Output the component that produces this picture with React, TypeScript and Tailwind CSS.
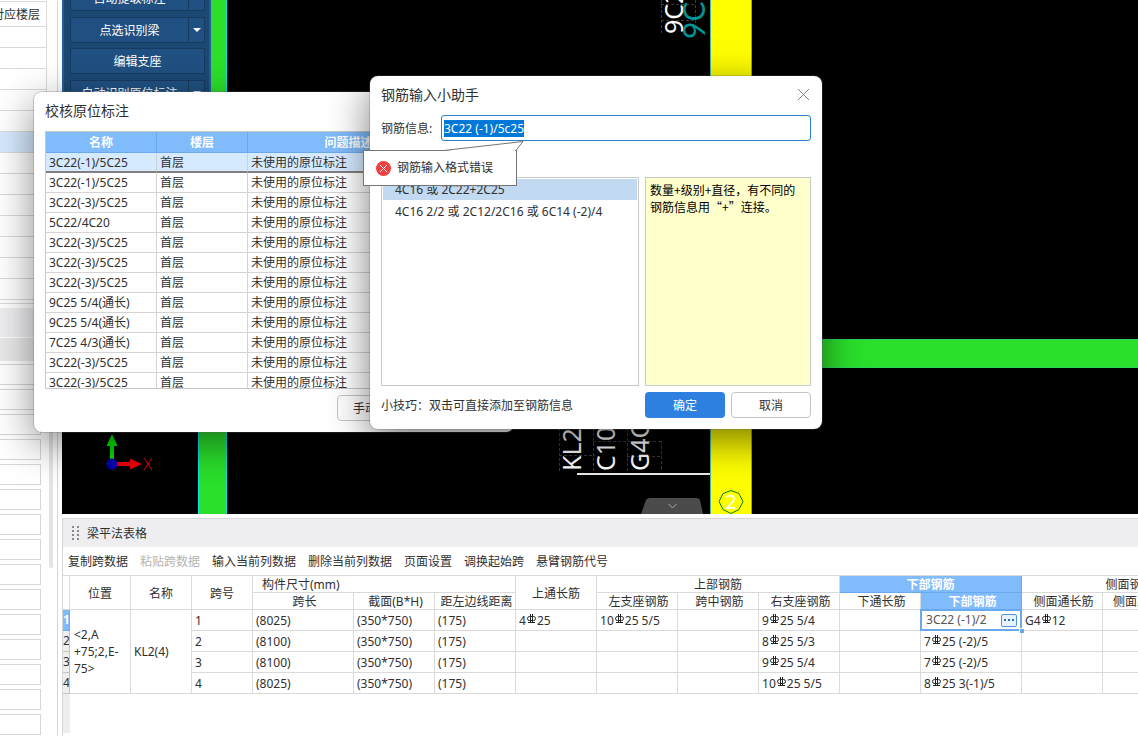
import { useEffect, useRef } from "react";
import type { ReactNode } from "react";

const checkRows = [
  "3C22(-1)/5C25",
  "3C22(-1)/5C25",
  "3C22(-3)/5C25",
  "5C22/4C20",
  "3C22(-3)/5C25",
  "3C22(-3)/5C25",
  "3C22(-3)/5C25",
  "9C25 5/4(通长)",
  "9C25 5/4(通长)",
  "7C25 4/3(通长)",
  "3C22(-3)/5C25",
  "3C22(-3)/5C25",
];

const tableActions = [
  { label: "复制跨数据" },
  { label: "粘贴跨数据", disabled: true },
  { label: "输入当前列数据" },
  { label: "删除当前列数据" },
  { label: "页面设置" },
  { label: "调换起始跨" },
  { label: "悬臂钢筋代号" },
];

const spans = [
  { no: "1", length: "(8025)", size: "(350*750)", edge: "(175)", top: "4C25", left: "10C25 5/5", right: "9C25 5/4", bottom: "", side: "G4C12" },
  { no: "2", length: "(8100)", size: "(350*750)", edge: "(175)", top: "", left: "", right: "8C25 5/3", bottom: "7C25 (-2)/5", side: "" },
  { no: "3", length: "(8100)", size: "(350*750)", edge: "(175)", top: "", left: "", right: "9C25 5/4", bottom: "7C25 (-2)/5", side: "" },
  { no: "4", length: "(8025)", size: "(350*750)", edge: "(175)", top: "", left: "", right: "10C25 5/5", bottom: "8C25 3(-1)/5", side: "" },
];

function Rebar({ value }: { value: string }) {
  const [before, after] = value.split("C");
  if (after === undefined) return null;
  return (
    <span className="flex items-center">
      {before}
      <svg className="mx-px mb-1 h-[10px] w-[9px]" viewBox="0 0 9 10" fill="none" stroke="#222" role="img" aria-label="C">
        <rect x="0.5" y="2.5" width="8" height="4" rx="2" />
        <path d="M3.5 0v9M5.5 0v9M1 8.5h7" />
      </svg>
      {after}
    </span>
  );
}

function Td({ children }: { children?: ReactNode }) {
  return <td className="h-[21px] overflow-hidden border-r border-b border-[#dadada] px-0 pt-px pb-0 pl-[3px] whitespace-nowrap">{children}</td>;
}

function Th({ children, colSpan, rowSpan, active, start }: { children?: ReactNode; colSpan?: number; rowSpan?: number; active?: boolean; start?: boolean }) {
  return (
    <th
      colSpan={colSpan}
      rowSpan={rowSpan}
      className={
        "h-[17px] overflow-hidden border-r border-b pt-px pr-0 pb-0 leading-[15px] whitespace-nowrap " +
        (active ? "border-[#6aa9ee] bg-[#80bbfc] font-bold text-white " : "border-[#dadada] font-normal ") +
        (start ? "pl-[9px] text-left" : colSpan || rowSpan ? "pl-0 text-center" : "pl-[3px] text-center")
      }
    >
      {children}
    </th>
  );
}

function PropertySidebar() {
  return (
    <aside className="w-[62px] shrink-0 overflow-hidden bg-white">
      <div className="h-full w-[58px] border-r border-[#d6d6d6]">
        <table className="mt-px w-[47px] table-fixed border-separate border-spacing-0 border-t border-[#d9d9d9]">
          <thead>
            <tr>
              <th className="h-[25px] border-r border-b border-[#d9d9d9] px-0 pt-0.5 pb-0 font-normal">
                <span className="flex justify-end pr-1.5 whitespace-nowrap">对应楼层</span>
              </th>
            </tr>
          </thead>
          <tbody>
            {Array.from({ length: 13 }, (_, i) => (
              <tr key={i}>
                <td className={"h-[21px] border-r border-b border-[#d9d9d9] p-0 " + (i === 5 ? "bg-[#d6eaff]" : "")} />
              </tr>
            ))}
          </tbody>
        </table>
        <div className="mt-[3px] border-t border-[#d9d9d9]" />
        <div className="mt-1 h-[29px] bg-[#eeeef0]" />
        <div className="mt-px h-[23px] bg-[#e9e9e9]" />
        <div className="mt-[3px] flex gap-2">
          <div className="flex w-[41px] flex-col gap-1">
            {Array.from({ length: 16 }, (_, i) => (
              <input key={i} readOnly aria-label={"属性值 " + (i + 1)} className="h-[21px] w-full border border-l-0 border-[#d6d6d6] bg-white outline-none" />
            ))}
          </div>
          <div className="h-[204px] w-1 rounded-full bg-[#e4e4e4]" />
        </div>
      </div>
    </aside>
  );
}

function ToolButton({ label, split }: { label: string; split?: boolean }) {
  return (
    <div className="flex h-[26px] border border-[#173a5e] bg-[#205081] text-white">
      <button className="flex-1 pt-px">{label}</button>
      {split && (
        <button aria-label={label + " 更多"} className="flex w-4 items-center justify-center border-l border-[#173a5e]">
          <svg className="h-1 w-2" viewBox="0 0 8 4">
            <path d="M0 0h8L4 4z" fill="#fff" />
          </svg>
        </button>
      )}
    </div>
  );
}

function Viewport() {
  return (
    <section className="relative flex-1 overflow-hidden bg-black">
      <svg className="absolute top-0 left-0 h-[514px] w-full" aria-label="梁平面图" fontFamily="'Noto Sans', sans-serif">
        <rect x="136" y="0" width="29" height="514" fill="#2bdf2b" />
        <path d="M136.5 0v514M164.5 0v514" stroke="#00e5e5" />
        <rect x="690" y="339" width="100%" height="29" fill="#2bdf2b" />
        <path d="M690 339.5h2000M690 367.5h2000" stroke="#27d65f" />
        <rect x="648" y="0" width="42" height="514" fill="#ffff00" />
        <path d="M648.5 0v514M689.5 0v514" stroke="#4bb6a0" />

        <g fill="none" stroke="#3a3a3a" strokeDasharray="3 2">
          <path d="M497.5 428v43M531.5 428v43M565.5 428v43M599.5 441v30M497 455.5h36M531 441.5h68M565 456.5h34" />
          <path d="M599.5 0v34M633.5 0v34M599 20.5h34M599 4.5h34" />
        </g>
        <g fill="#ffffff" fontSize="25">
          <text transform="translate(519 471) rotate(-90)">KL2(4)</text>
          <text transform="translate(553 471) rotate(-90)">C10@100</text>
          <text transform="translate(587 471) rotate(-90)">G4C12</text>
          <text transform="translate(621 34) rotate(-90)">9C25</text>
        </g>
        <text transform="translate(643 39) rotate(-90)" fill="#009494" fontFamily="Lato, sans-serif" fontSize="30" fontWeight="400">9C25</text>
        <path d="M515 474h133" stroke="#e9e9e9" strokeWidth="2" />

        <path d="M579 514l5-14q1-2 4-2h46q3 0 4 2l3 14z" fill="#4b4b4b" />
        <path d="M606.5 504l4 4 4-4" fill="none" stroke="#aaa" />
        <path d="M669 490.5l8 3 4 8-4 8-8 4-8-4-4-8 4-8z" fill="none" stroke="#008000" />
        <text x="669" y="509" fill="#fff" fontSize="20" textAnchor="middle">2</text>

        <path d="M48 438h4v22h-4z" fill="#00e000" />
        <path d="M44.500 446h11L50 434z" fill="#00e000" />
        <path d="M54 462h16v4H54z" fill="#ee0000" />
        <path d="M68 458.500v11l12-5.500z" fill="#ee0000" />
        <circle cx="50" cy="464" r="5.500" fill="#0000b4" />
        <path d="M82 458l8 12M90 458l-8 12" stroke="#ee0000" />
      </svg>

      <div className="absolute -top-[15px] left-0 flex w-[149px] flex-col gap-1.5 border-x-2 border-[#275c9b] bg-[#1b4872] pr-1 pb-4 pl-[6px]">
        <ToolButton label="自动提取标注" split />
        <div className="flex flex-col gap-[5px]">
          <ToolButton label="点选识别梁" split />
          <ToolButton label="编辑支座" />
        </div>
        <ToolButton label="自动识别原位标注" split />
      </div>
    </section>
  );
}

function BeamPanel() {
  return (
    <section className="mt-1 flex h-[218px] shrink-0 flex-col border-t border-l border-[#d6d6d6] bg-white">
      <header className="flex h-[28px] shrink-0 items-center gap-2 bg-[#eeeef0] pl-[9px]">
        <svg className="h-[14px] w-[7px]" viewBox="0 0 7 14" fill="#888" aria-hidden="true">
          <path d="M0 0h2v2H0zM5 0h2v2H5zM0 4h2v2H0zM5 4h2v2H5zM0 8h2v2H0zM5 8h2v2H5zM0 12h2v2H0zM5 12h2v2H5z" />
        </svg>
        <h2 className="pt-0.5">梁平法表格</h2>
      </header>
      <div className="flex h-[28px] shrink-0 items-center gap-3 pt-0.5 pl-[5px] whitespace-nowrap">
        {tableActions.map((a) => (
          <button key={a.label} disabled={a.disabled} className="disabled:text-[#b4b4b4]">
            {a.label}
          </button>
        ))}
      </div>
      <div className="flex-1 overflow-hidden border-t border-[#dadada]">
        <table className="w-[1230px] table-fixed border-separate border-spacing-0">
          <colgroup>
            <col className="w-[7px]" />
            <col className="w-[61px]" />
            <col className="w-[61px]" />
            <col className="w-[61px]" />
            <col className="w-[101px]" />
            <col className="w-[81px]" />
            <col className="w-[81px]" />
            <col className="w-[81px]" />
            <col className="w-[81px]" />
            <col className="w-[81px]" />
            <col className="w-[81px]" />
            <col className="w-[81px]" />
            <col className="w-[101px]" />
            <col className="w-[81px]" />
            <col className="w-[102px]" />
            <col className="w-[88px]" />
          </colgroup>
          <thead>
            <tr>
              <Th rowSpan={2} />
              <Th rowSpan={2}>位置</Th>
              <Th rowSpan={2}>名称</Th>
              <Th rowSpan={2}>跨号</Th>
              <Th colSpan={3} start>构件尺寸(mm)</Th>
              <Th rowSpan={2}>上通长筋</Th>
              <Th colSpan={3}>上部钢筋</Th>
              <Th colSpan={2} active>下部钢筋</Th>
              <Th colSpan={3}>侧面钢筋(总配筋值)</Th>
            </tr>
            <tr>
              <Th>跨长</Th>
              <Th>截面(B*H)</Th>
              <Th>距左边线距离</Th>
              <Th>左支座钢筋</Th>
              <Th>跨中钢筋</Th>
              <Th>右支座钢筋</Th>
              <Th>下通长筋</Th>
              <Th active>下部钢筋</Th>
              <Th>侧面通长筋</Th>
              <Th>侧面原位标注筋</Th>
              <Th>拉筋</Th>
            </tr>
          </thead>
          <tbody>
            {spans.map((s, i) => (
              <tr key={s.no}>
                <th
                  scope="row"
                  className={
                    "overflow-hidden border-r border-b p-0 text-left " +
                    (i === 0 ? "border-[#6aa9ee] bg-[#80bbfc] font-bold text-white" : "border-[#c4c4c4] bg-[#eeeeee] font-normal")
                  }
                >
                  {s.no}
                </th>
                {i === 0 && (
                  <>
                    <td rowSpan={4} className="border-r border-b border-[#dadada] px-1 py-0 leading-[17px]">
                      {"<2,A"}
                      <br />
                      {"+75;2,E-"}
                      <br />
                      {"75>"}
                    </td>
                    <td rowSpan={4} className="border-r border-b border-[#dadada] px-[3px] py-0">KL2(4)</td>
                  </>
                )}
                <Td>{s.no}</Td>
                <Td>{s.length}</Td>
                <Td>{s.size}</Td>
                <Td>{s.edge}</Td>
                <Td><Rebar value={s.top} /></Td>
                <Td><Rebar value={s.left} /></Td>
                <Td />
                <Td><Rebar value={s.right} /></Td>
                <Td />
                {i === 0 ? (
                  <td className="relative h-[21px] p-0">
                    <div className="absolute -top-px -left-px flex h-[22px] w-[102px] items-center justify-between border-2 border-[#69a8ec] bg-white pr-[3px] pl-1 text-[#555]">
                      <span>3C22 (-1)/2</span>
                      <button aria-label="钢筋输入小助手" className="flex h-[13px] w-4 items-center justify-center rounded-[2px] border border-[#4c94e0] bg-[#eaf3fd]">
                        <svg className="h-0.5 w-2.5" viewBox="0 0 10 2" fill="#2a6fc4">
                          <path d="M0 0h2v2H0zM4 0h2v2H4zM8 0h2v2H8z" />
                        </svg>
                      </button>
                      <i className="absolute -right-1 -bottom-1 size-[5px] border-t border-l border-white bg-[#69a8ec]" />
                    </div>
                  </td>
                ) : (
                  <Td><Rebar value={s.bottom} /></Td>
                )}
                <Td><Rebar value={s.side} /></Td>
                <Td />
                <Td />
              </tr>
            ))}
          </tbody>
        </table>
        <div className="h-[39px] w-[7px] bg-[#eeeeee]" />
      </div>
    </section>
  );
}

function CheckDialog() {
  return (
    <div role="dialog" aria-label="校核原位标注" className="absolute top-[92px] left-[34px] flex h-[340px] w-[480px] flex-col rounded-lg bg-white px-[11px] shadow-[0_0_0_1px_#6664,0_12px_40px_#0007]">
      <h2 className="h-[39px] text-sm leading-[37px]">校核原位标注</h2>
      <div className="h-[258px] overflow-hidden border border-[#c8c8c8]">
        <table className="w-full table-fixed border-separate border-spacing-0">
          <colgroup>
            <col className="w-[111px]" />
            <col className="w-[91px]" />
            <col className="w-[202px]" />
            <col />
          </colgroup>
          <thead>
            <tr className="bg-[#80bbfc] text-white">
              {["名称", "楼层", "问题描述", ""].map((h, i) => (
                <th key={i} className="h-[21px] border-r border-b border-[#6aa9ee] px-0 pt-0.5 pb-0 font-bold">{h}</th>
              ))}
            </tr>
          </thead>
          <tbody>
            {checkRows.map((name, i) => (
              <tr key={i} className={i === 0 ? "bg-[#d6eaff]" : ""}>
                {[name, "首层", "未使用的原位标注", ""].map((text, j) => (
                  <td key={j} className={"h-5 border-r pr-0 pb-0 pl-[3px] whitespace-nowrap " + (i === 0 ? "border-b-2 border-r-[#d0d0d0] border-b-[#808080] pt-px" : "border-b border-[#d4d4d4] pt-0")}>
                    {text}
                  </td>
                ))}
              </tr>
            ))}
          </tbody>
        </table>
      </div>
      <footer className="mt-1.5 flex justify-end pr-[86px]">
        <button className="h-[26px] w-20 rounded border border-[#c4c4c4] pt-0.5">手动识别</button>
      </footer>
    </div>
  );
}

function RebarDialog() {
  const field = useRef<HTMLInputElement>(null);
  useEffect(() => {
    field.current?.focus();
    field.current?.select();
  }, []);
  return (
    <div role="dialog" aria-label="钢筋输入小助手" className="absolute top-[76px] left-[370px] flex h-[353px] w-[452px] flex-col rounded-lg bg-white px-[11px] shadow-[0_0_0_1px_#6664,0_12px_40px_#0008]">
      <header className="mb-0.5 flex h-[37px] items-center justify-between">
        <h2 className="text-sm">钢筋输入小助手</h2>
        <button aria-label="关闭" className="mr-0.5">
          <svg className="size-[11px]" viewBox="0 0 11 11" stroke="#808080" fill="none">
            <path d="M0 0l11 11M11 0L0 11" />
          </svg>
        </button>
      </header>
      <div className="flex items-center">
        <label htmlFor="rebar" className="w-[60px] pt-0.5">钢筋信息:</label>
        <input
          id="rebar"
          ref={field}
          defaultValue="3C22 (-1)/5c25"
          className="h-[26px] min-w-0 flex-1 rounded-[3px] border border-[#2d7fd3] bg-white px-0.5 outline-none selection:bg-[#0078d7] selection:text-white"
        />
      </div>
      <div className="mt-9 flex h-[209px] gap-1.5">
        <ul className="flex-1 border border-[#c8c8c8] p-px">
          <li className="h-[21px] bg-[#c1d9f1] pl-3 leading-[21px]">4C16 或 2C22+2C25</li>
          <li className="h-6 pl-3 leading-6">4C16 2/2 或 2C12/2C16 或 6C14 (-2)/4</li>
        </ul>
        <p className="w-[166px] border border-[#c8c8c8] bg-[#ffffcc] px-1 pt-[3px] font-['Noto_Sans_CJK_SC',sans-serif] leading-[17px] text-black">
          数量+级别+直径，有不同的钢筋信息用“+”连接。
        </p>
      </div>
      <footer className="mt-1.5 flex items-center gap-1.5">
        <p className="flex-1 pt-0.5">小技巧：双击可直接添加至钢筋信息</p>
        <button className="h-[26px] w-20 rounded bg-[#2d80e0] pt-0.5 text-white">确定</button>
        <button className="h-[26px] w-20 rounded border border-[#c4c4c4] pt-0.5">取消</button>
      </footer>

      <div role="alert" className="absolute top-[74px] -left-[7px] flex h-9 w-[154px] items-center gap-1.5 border border-[#757575] bg-white pl-3">
        <svg className="absolute -top-[10px] left-20 h-[11px] w-[80px]" viewBox="0 0 80 11" aria-hidden="true">
          <path d="M0 10L79 .5 71 10v1H0z" fill="#fff" />
          <path d="M0 9.500L79 .5 71.500 10" fill="none" stroke="#757575" />
        </svg>
        <svg className="size-[15px]" viewBox="0 0 15 15" aria-hidden="true">
          <circle cx="7.500" cy="7.500" r="7.500" fill="#f0403f" />
          <path d="M4 4l7 7M11 4l-7 7" stroke="#fff" />
        </svg>
        钢筋输入格式错误
      </div>
    </div>
  );
}

export default function App() {
  return (
    <main className="relative flex h-screen overflow-hidden bg-white font-['Noto_Sans','Noto_Sans_CJK_SC',sans-serif] text-xs text-[#303030]">
      <PropertySidebar />
      <div className="flex min-w-0 flex-1 flex-col">
        <Viewport />
        <BeamPanel />
      </div>
      <CheckDialog />
      <RebarDialog />
    </main>
  );
}
